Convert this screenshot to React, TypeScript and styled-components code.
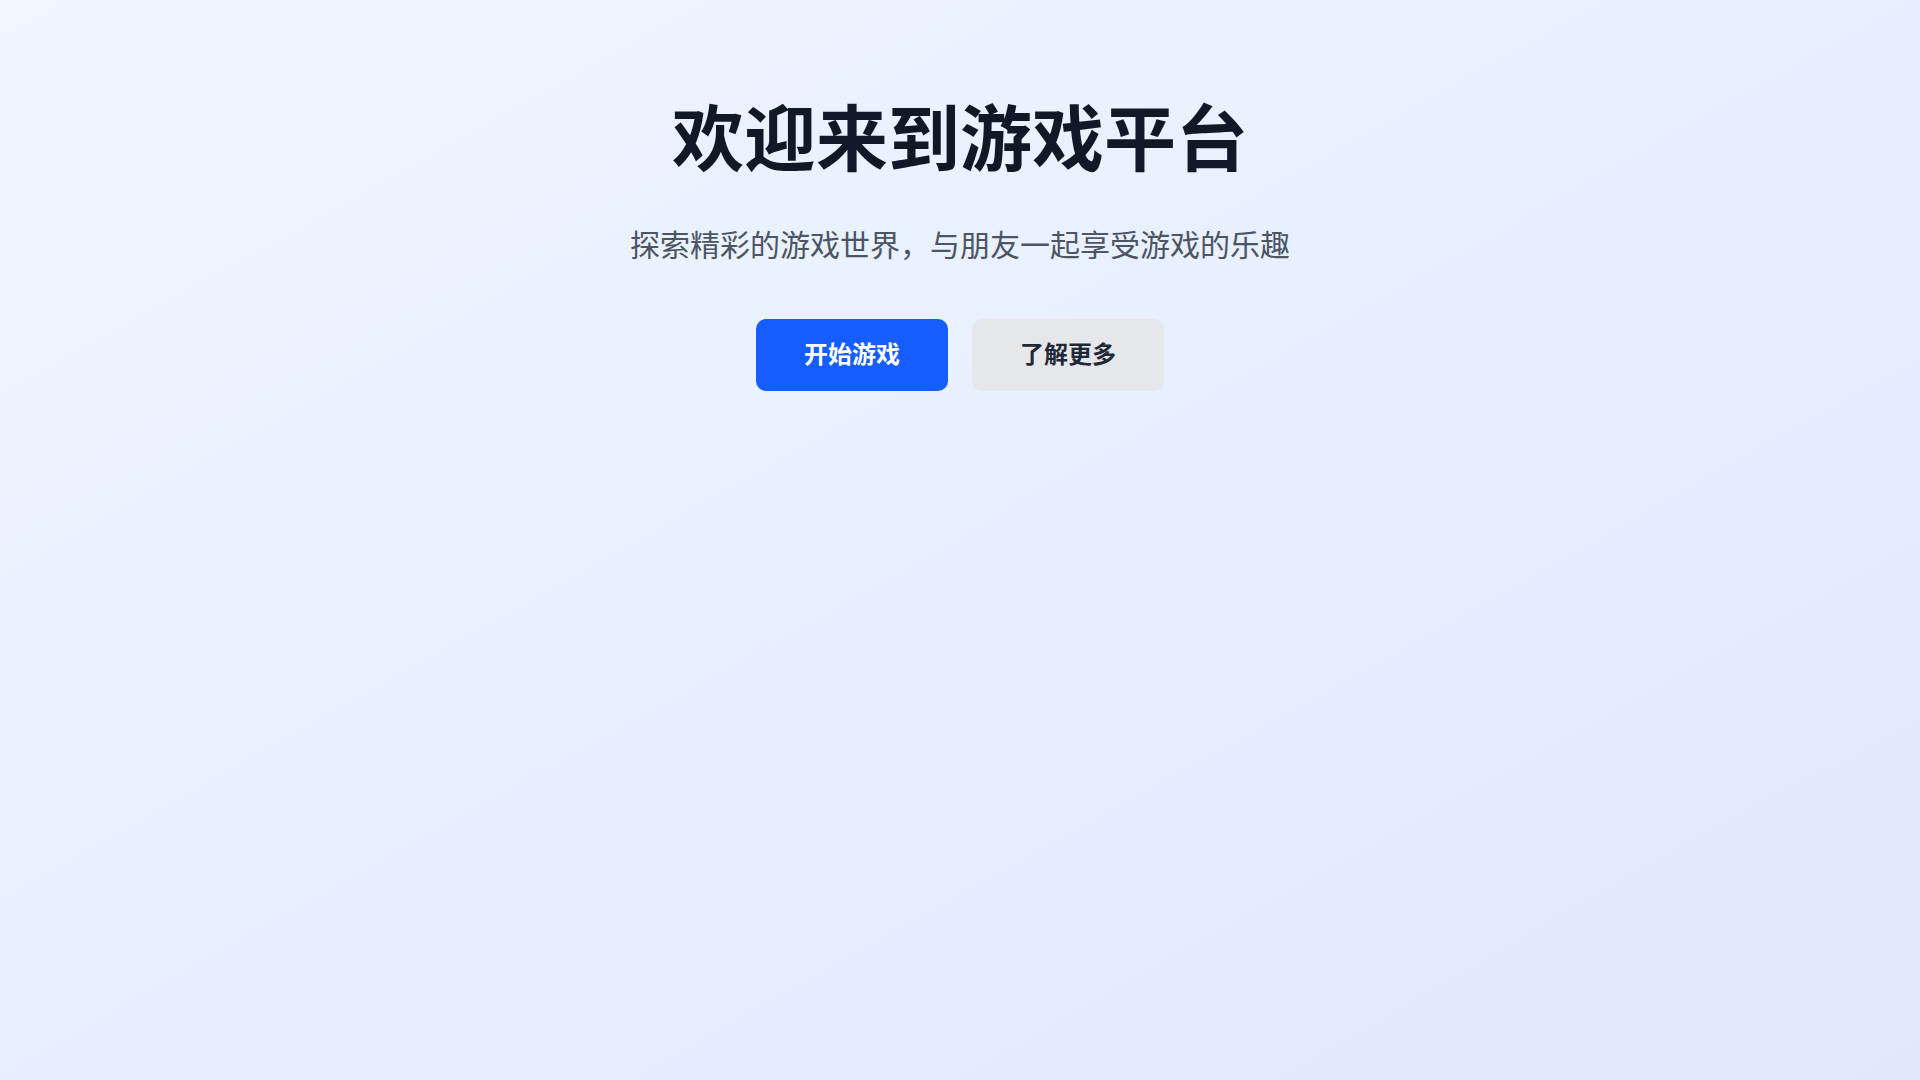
import styled, { createGlobalStyle } from "styled-components";

const GlobalStyle = createGlobalStyle`
  html, body {
    margin: 0;
    padding: 0;
  }
  body {
    font-family: "Noto Sans CJK SC", "Noto Sans", sans-serif;
  }
`;

function App() {
  return (
    <>
      <GlobalStyle />
      <Page>
        <Hero>
          <Title>欢迎来到游戏平台</Title>
          <Subtitle>探索精彩的游戏世界，与朋友一起享受游戏的乐趣</Subtitle>
          <Actions>
            <Button $variant="primary">开始游戏</Button>
            <Button $variant="secondary">了解更多</Button>
          </Actions>
        </Hero>
      </Page>
    </>
  );
}

export default App;

const Page = styled.main`
  min-height: 100vh;
  box-sizing: border-box;
  background: linear-gradient(to bottom right, #eff6ff, #e0e7ff);
  padding-top: 98px;
`;

const Hero = styled.section`
  display: flex;
  flex-direction: column;
  align-items: center;
  text-align: center;
`;

const Title = styled.h1`
  margin: 0 0 55px;
  font-size: 72px;
  line-height: 72px;
  font-weight: 700;
  color: #111827;
`;

const Subtitle = styled.p`
  margin: 0 0 58px;
  font-size: 30px;
  line-height: 36px;
  color: #4b5563;
`;

const Actions = styled.div`
  display: flex;
  gap: 24px;
`;

const Button = styled.button<{ $variant: "primary" | "secondary" }>`
  width: 192px;
  height: 72px;
  padding: 0 0 5px;
  border: 0;
  border-radius: 10px;
  font-family: inherit;
  font-size: 24px;
  font-weight: 700;
  cursor: pointer;
  background: ${(p) => (p.$variant === "primary" ? "#165dff" : "#e5e7eb")};
  color: ${(p) => (p.$variant === "primary" ? "#ffffff" : "#1f2937")};
`;
